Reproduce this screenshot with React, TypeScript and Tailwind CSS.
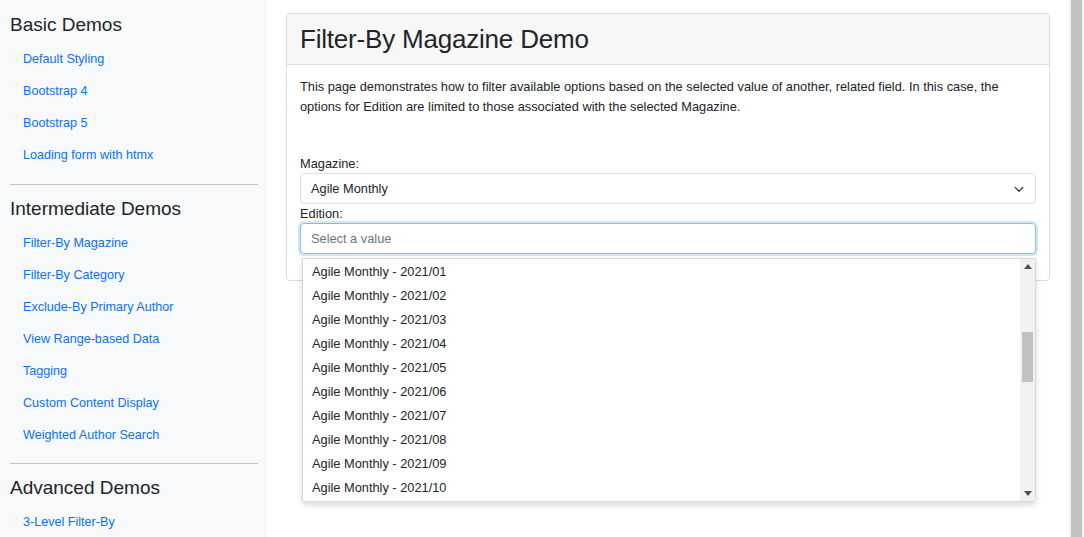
import React from 'react';

const basic = ['Default Styling', 'Bootstrap 4', 'Bootstrap 5', 'Loading form with htmx'];
const intermediate = [
    'Filter-By Magazine',
    'Filter-By Category',
    'Exclude-By Primary Author',
    'View Range-based Data',
    'Tagging',
    'Custom Content Display',
    'Weighted Author Search',
];
const editions = ['01', '02', '03', '04', '05', '06', '07', '08', '09', '10'];

function NavLinks({ items }: { items: string[] }) {
    return (
        <ul className="flex flex-col">
            {items.map(label => (
                <li key={label} className="h-8 flex items-center pl-[13px]">
                    <a className="text-[12.6px] text-[#0d6efd]">{label}</a>
                </li>
            ))}
        </ul>
    );
}

export default function App() {
    return (
        <div className="flex h-[537px] w-[1084px] overflow-hidden bg-white text-[#212529]" style={{ fontFamily: '"Liberation Sans", Arial, sans-serif' }}>
            {/* Sidebar */}
            <aside className="w-[267px] shrink-0 bg-[#f8f9fa] pl-[10px] pr-[9px] pt-[12px]">
                <h4 className="text-[19px] leading-[26px] mb-[5px]">Basic Demos</h4>
                <NavLinks items={basic} />
                <hr className="border-t border-[#c4c5c7] mt-[13px] mb-[11px]" />
                <h4 className="text-[19px] leading-[26px] mb-[5px]">Intermediate Demos</h4>
                <NavLinks items={intermediate} />
                <hr className="border-t border-[#c4c5c7] mt-[12px] mb-[11px]" />
                <h4 className="text-[19px] leading-[26px] mb-[5px]">Advanced Demos</h4>
                <NavLinks items={['3-Level Filter-By']} />
            </aside>

            {/* Main */}
            <main className="flex-1 pl-[19px] pr-[19px] pt-[13px]">
                <div className="border border-[#dcdcdc] rounded-[4px]">
                    <div className="bg-[#f7f7f7] border-b border-[#dcdcdc] h-[51px] flex items-center px-[13px] rounded-t-[4px]">
                        <h3 className="text-[26px] leading-none tracking-[-0.2px]">Filter-By Magazine Demo</h3>
                    </div>
                    <div className="px-[13px] pt-[12px] pb-[26px]">
                        <p className="text-[12.8px] leading-[20px]">
                            This page demonstrates how to filter available options based on the selected value of another, related field. In this case, the options for Edition are limited to those associated with the selected Magazine.
                        </p>
                        <label className="block text-[12.8px] leading-[16px] mt-[39px] mb-[1px]">Magazine:</label>
                        <div className="h-[31px] border border-[#dee2e6] rounded-[4px] flex items-center justify-between pl-[10px] pr-[10px]">
                            <span className="text-[12.8px]">Agile Monthly</span>
                            <svg width="12" height="12" viewBox="0 0 16 16" fill="none" stroke="#343a40" strokeWidth="1.6" strokeLinecap="round" strokeLinejoin="round">
                                <path d="M3 6l5 5 5-5" />
                            </svg>
                        </div>
                        <label className="block text-[12.8px] leading-[16px] mt-[2px] mb-[1px]">Edition:</label>
                        <div className="relative">
                            <div className="h-[31px] border border-[#86b7fe] rounded-[4px] flex items-center pl-[10px] shadow-[0_0_0_2px_rgba(13,110,253,0.18)]">
                                <span className="text-[12.8px] text-[#6c757d]">Select a value</span>
                            </div>
                            {/* Dropdown */}
                            <div className="absolute left-[2px] right-0 top-[35px] h-[244px] bg-white border border-[#d7d7d7] rounded-b-[3px] shadow-[0_3px_6px_rgba(0,0,0,0.15)] flex z-10">
                                <ul className="flex-1 pt-[1px] overflow-hidden">
                                    {editions.map(e => (
                                        <li key={e} className="h-[24px] flex items-center pl-[9px] text-[12.8px] text-[#212529]">
                                            Agile Monthly - 2021/{e}
                                        </li>
                                    ))}
                                </ul>
                                <div className="w-[15px] bg-[#f1f1f1] flex flex-col items-center">
                                    <div className="h-[15px] flex items-center justify-center">
                                        <svg width="8" height="5" viewBox="0 0 8 5"><path d="M0 5L4 0L8 5Z" fill="#505050" /></svg>
                                    </div>
                                    <div className="flex-1 w-full px-[2px]">
                                        <div className="mt-[58px] h-[50px] bg-[#c1c1c1]" />
                                    </div>
                                    <div className="h-[15px] flex items-center justify-center">
                                        <svg width="8" height="5" viewBox="0 0 8 5"><path d="M0 0L8 0L4 5Z" fill="#505050" /></svg>
                                    </div>
                                </div>
                            </div>
                        </div>
                    </div>
                </div>
            </main>

            {/* Page scrollbar */}
            <div className="w-[15px] shrink-0 bg-[#f1f1f1] px-[2px]">
                <div className="h-full bg-[#c1c1c1]" />
            </div>
        </div>
    );
}
